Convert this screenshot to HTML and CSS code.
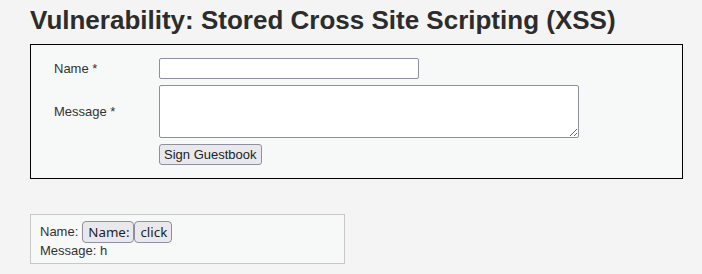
FILE: index.html
```html
<!DOCTYPE html>
<html>
<head>
<meta charset="utf-8">
<link rel="stylesheet" href="styles.css">
</head>
<body>
<div class="page">
  <h1 class="title">Vulnerability: Stored Cross Site Scripting (XSS)</h1>
  <div class="vulnerable_code_area">
    <form class="guest-form">
      <label class="lbl" for="n">Name *</label>
      <div><input id="n" class="txt" type="text"></div>
      <label class="lbl lbl-msg" for="m">Message *</label>
      <div><textarea id="m" class="area"></textarea></div>
      <div></div>
      <div><button type="button" class="sign">Sign Guestbook</button></div>
    </form>
  </div>
  <div class="comment">
    <div class="line">Name: <button type="button" class="inj">Name:</button><button type="button" class="inj">click</button></div>
    <div class="line">Message: h</div>
  </div>
</div>
</body>
</html>
```
FILE: styles.css
```css
html, body { margin: 0; padding: 0; }
body {
  background: #f4f4f4;
  font-family: "Liberation Sans", Arial, sans-serif;
  color: #333;
}
.page { padding: 0 19px 0 30px; }
.title {
  margin: 0;
  padding-top: 5px;
  height: 39px;
  font-family: "Liberation Sans", Arial, sans-serif;
  font-weight: 700;
  font-size: 26px;
  line-height: 30px;
  color: #2c2c2c;
}
.vulnerable_code_area {
  border: 1px solid #000;
  background: #f7f8f8;
  height: 133px;
  box-sizing: content-box;
}
.guest-form {
  display: grid;
  grid-template-columns: 105px auto;
  column-gap: 0;
  row-gap: 6px;
  padding: 13px 0 0 23px;
  align-items: center;
  justify-content: start;
}
.lbl { font-size: 13px; color: #333; }
.txt {
  display: block;
  margin: 0;
  width: 260px;
  height: 21px;
  box-sizing: border-box;
  border: 1px solid #8f8f9d;
  border-radius: 2px;
  background: #fff;
}
.area {
  display: block;
  margin: 0;
  width: 420px;
  height: 53px;
  box-sizing: border-box;
  border: 1px solid #8f8f9d;
  border-radius: 2px;
  background: #fff;
}
.sign {
  display: block;
  margin: 0;
  height: 21px;
  padding: 0 4px;
  font-family: "Liberation Sans", Arial, sans-serif;
  font-size: 13px;
  color: #222;
  background: #e9e9ed;
  border: 1px solid #8f8f9d;
  border-radius: 3px;
}
.comment {
  margin-top: 35px;
  width: 315px;
  height: 50px;
  border: 1px solid #c8c8c8;
  background: #f7f8f8;
  padding: 6px 0 0 9px;
  box-sizing: border-box;
  font-size: 13px;
  color: #333;
}
.line { line-height: 16px; }
.line:first-child { height: 22px; display: flex; align-items: center; }
.inj {
  margin: 0;
  height: 22px;
  padding: 0 4px 0 5px;
  font-family: "Noto Sans", sans-serif;
  font-size: 13.33px;
  color: #222;
  background: #e9e9ed;
  border: 1px solid #8f8f9d;
  border-radius: 4px;
}
.line:first-child .inj:first-of-type { margin-left: 4px; }
```
